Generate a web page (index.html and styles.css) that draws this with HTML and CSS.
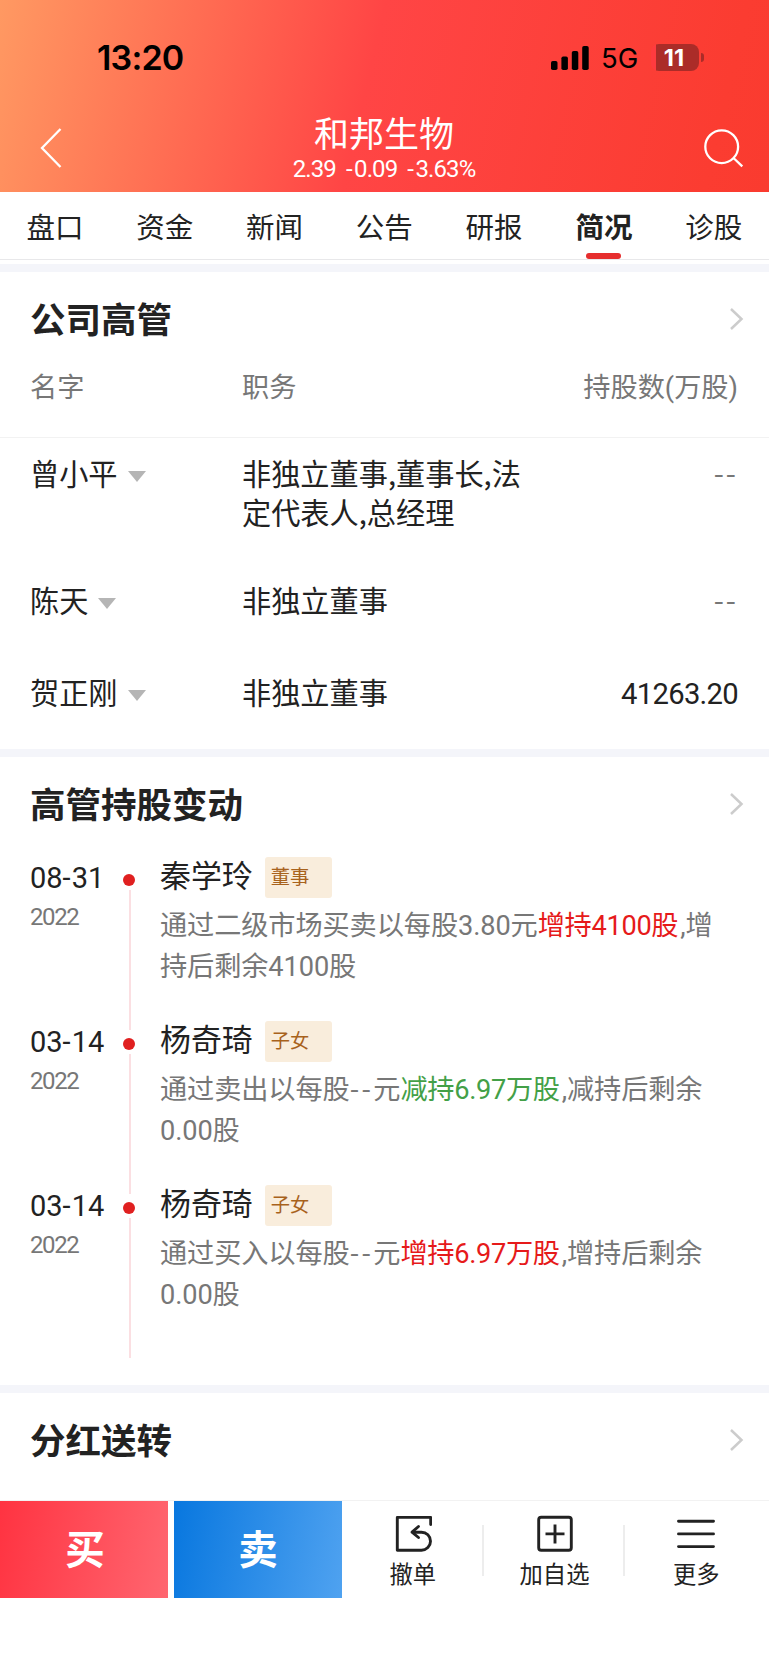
FILE: index.html
```html
<!DOCTYPE html>
<html lang="zh-CN">

<head>
    <meta charset="UTF-8">
    <meta name="viewport" content="width=device-width, initial-scale=1.0">
    <title>和邦生物</title>
    <link rel="stylesheet" href="styles.css">
</head>

<body>
    <div class="header">
        <div class="status">
            <span class="time">13:20</span>
            <svg class="signal" width="38" height="24" viewBox="0 0 38 24">
                <rect x="0" y="15" width="6.5" height="9" rx="1.8" />
                <rect x="10.4" y="10.5" width="6.5" height="13.5" rx="1.8" />
                <rect x="20.8" y="5" width="6.5" height="19" rx="1.8" />
                <rect x="31.2" y="0" width="6.5" height="24" rx="1.8" />
            </svg>
            <span class="net">5G</span>
            <div class="battery">11</div>
            <i class="battery-tip"></i>
        </div>
        <div class="nav">
            <svg class="back" width="24" height="42" viewBox="0 0 24 42">
                <path d="M21.5 2 L3 21 L21.5 40" />
            </svg>
            <div class="stock">
                <h1>和邦生物</h1>
                <p>2.39 <span>-</span>0.09 <span>-</span>3.63%</p>
            </div>
            <svg class="search" width="42" height="42" viewBox="0 0 42 42">
                <circle cx="18.7" cy="18.7" r="16.4" />
                <path d="M30.5 30 L39.3 38.4" />
            </svg>
        </div>
    </div>

    <ul class="tabs">
        <li>盘口</li>
        <li>资金</li>
        <li>新闻</li>
        <li>公告</li>
        <li>研报</li>
        <li class="active">简况</li>
        <li>诊股</li>
    </ul>

    <!-- 公司高管 -->
    <div class="section managers">
        <div class="title">
            <h2>公司高管</h2>
            <svg class="arrow" width="15" height="24" viewBox="0 0 15 24">
                <path d="M2 2 L12.5 12 L2 22" />
            </svg>
        </div>
        <div class="row thead">
            <span class="name">名字</span>
            <span class="job">职务</span>
            <span class="num">持股数(万股)</span>
        </div>
        <div class="row first">
            <span class="name">曾小平<i class="down"></i></span>
            <span class="job">非独立董事,董事长,法定代表人,总经理</span>
            <span class="num none">--</span>
        </div>
        <div class="row">
            <span class="name">陈天<i class="down"></i></span>
            <span class="job">非独立董事</span>
            <span class="num none">--</span>
        </div>
        <div class="row">
            <span class="name">贺正刚<i class="down"></i></span>
            <span class="job">非独立董事</span>
            <span class="num count">41263.20</span>
        </div>
    </div>

    <!-- 高管持股变动 -->
    <div class="section changes">
        <div class="title">
            <h2>高管持股变动</h2>
            <svg class="arrow" width="15" height="24" viewBox="0 0 15 24">
                <path d="M2 2 L12.5 12 L2 22" />
            </svg>
        </div>
        <ul class="timeline">
            <li>
                <div class="date">
                    <b>08<span>-</span>31</b>
                    <em>2022</em>
                </div>
                <div class="line"></div>
                <div class="info">
                    <div class="who">秦学玲<span class="tag">董事</span></div>
                    <p>通过二级市场买卖以每股3.80元<span class="red">增持4100股</span>,增持后剩余4100股</p>
                </div>
            </li>
            <li>
                <div class="date">
                    <b>03<span>-</span>14</b>
                    <em>2022</em>
                </div>
                <div class="line"></div>
                <div class="info">
                    <div class="who">杨奇琦<span class="tag">子女</span></div>
                    <p>通过卖出以每股<span class="dash">--</span>元<span class="green">减持6.97万股</span>,减持后剩余<br>0.00股</p>
                </div>
            </li>
            <li>
                <div class="date">
                    <b>03<span>-</span>14</b>
                    <em>2022</em>
                </div>
                <div class="line"></div>
                <div class="info">
                    <div class="who">杨奇琦<span class="tag">子女</span></div>
                    <p>通过买入以每股<span class="dash">--</span>元<span class="red">增持6.97万股</span>,增持后剩余<br>0.00股</p>
                </div>
            </li>
        </ul>
    </div>

    <!-- 分红送转 -->
    <div class="section bonus">
        <div class="title">
            <h2>分红送转</h2>
            <svg class="arrow" width="15" height="24" viewBox="0 0 15 24">
                <path d="M2 2 L12.5 12 L2 22" />
            </svg>
        </div>
    </div>

    <div class="footer">
        <div class="btn buy">买</div>
        <div class="btn sell">卖</div>
        <div class="tool">
            <svg width="38" height="38" viewBox="0 0 38 38">
                <path d="M36.7 9.5 V2.4 H3.3 V35.2 H27.5 A9 9 0 0 0 27.5 17.2 H19" />
                <path d="M24.5 11.5 L18 17.2 L24.5 22.5" />
            </svg>
            <span>撤单</span>
        </div>
        <div class="tool">
            <svg width="38" height="38" viewBox="0 0 38 38">
                <rect x="2.7" y="2.3" width="32.6" height="33" rx="2.5" />
                <path d="M9.5 18.9 H28.5 M19 9.4 V28.4" stroke-linecap="butt" />
            </svg>
            <span>加自选</span>
        </div>
        <div class="tool">
            <svg width="38" height="38" viewBox="0 0 38 38">
                <path d="M1.5 6.2 H36.5 M1.5 18.9 H36.5 M1.5 31.6 H36.5" />
            </svg>
            <span>更多</span>
        </div>
    </div>
</body>

</html>
```

FILE: styles.css
```css
* {
    margin: 0;
    padding: 0;
    list-style: none;
    box-sizing: border-box;
}

body {
    width: 769px;
    height: 1665px;
    overflow: hidden;
    background-color: #fff;
    color: #222;
    font-family: Roboto, "Noto Sans CJK SC", sans-serif;
    font-size: 29.2px;
}

svg {
    fill: none;
    flex-shrink: 0;
}

/* 头部 */
.header {
    height: 192px;
    background: linear-gradient(103deg, #ff9962 0%, #ff4545 47.5%, #fb3c31 92%, #fa3b2f 100%);
}

.status {
    display: flex;
    align-items: center;
    height: 115px;
    padding-left: 97px;
    font-family: Inter, sans-serif;
    color: #000;
}

.time {
    width: 454px;
    font-size: 34px;
    font-weight: 600;
    letter-spacing: -0.8px;
}

.signal {
    fill: #000;
}

.net {
    width: 50px;
    margin-left: 12px;
    padding-top: 1px;
    font-size: 27.5px;
}

.battery {
    width: 48px;
    height: 27px;
    padding-right: 6px;
    border-radius: 8px;
    background: linear-gradient(90deg, #ff3b3f 5px, #ab2c28 5px);
    color: #fff;
    font-size: 23.5px;
    font-weight: 700;
    line-height: 27px;
    text-align: center;
    text-indent: 4px;
}

.battery-tip {
    width: 3px;
    height: 9px;
    margin-left: 2px;
    border-radius: 0 4px 4px 0;
    background-color: #ab2c28;
}

.nav {
    display: flex;
    justify-content: space-between;
    height: 77px;
    padding: 0 24px 0 39px;
    color: #fff;
}

.nav svg {
    stroke: #fff;
    stroke-width: 2.3;
}

.back {
    margin: 12px 18px 0 0;
}

.search {
    margin-top: 13px;
}

.stock {
    margin-left: -16px;
    padding-top: 1px;
    text-align: center;
}

.stock h1 {
    font-size: 35px;
    font-weight: 400;
    line-height: 40px;
}

.stock p {
    font-size: 24px;
    letter-spacing: -0.9px;
    line-height: 26px;
    word-spacing: 5px;
}

.stock p span {
    letter-spacing: 1.5px;
}

/* 标签栏 */
.tabs {
    display: flex;
    height: 68px;
    border-bottom: 1px solid #e8e8ea;
}

.tabs li {
    display: flex;
    flex-direction: column;
    align-items: center;
    flex-shrink: 0;
    width: 109.8px;
    font-size: 28.5px;
    line-height: 61px;
    padding-top: 6px;
    height: 67px;
}

.tabs li.active {
    font-weight: 700;
}

.tabs li.active::after {
    content: "";
    width: 35px;
    height: 6px;
    margin-top: -6px;
    border-radius: 3px;
    background-color: #e62e2e;
}

/* 区块 */
.section {
    border-top: 8px solid #f4f5fa;
}

.title {
    display: flex;
    justify-content: space-between;
    align-items: center;
    height: 96px;
    padding: 1px 25px 0 30px;
}

.title h2 {
    font-size: 35.5px;
    font-weight: 700;
    line-height: 40px;
}

.arrow {
    margin-bottom: 4px;
    stroke: #ccc;
    stroke-width: 2.5;
}

/* 高管列表 */
.managers {
    height: 485px;
    margin-top: 4px;
}

.row {
    display: flex;
    height: 92px;
    padding: 0 31px 0 30px;
    line-height: 39px;
}

.thead {
    height: 70px;
    padding-top: 1px;
    border-bottom: 1px solid #f2f2f2;
    color: #777;
    font-size: 27.2px;
}

.first {
    height: 145px;
    padding-top: 18px;
}

.name {
    display: flex;
    align-items: center;
    width: 212px;
    height: 39px;
}

.down {
    margin: 1px 0 0 10px;
    border: 9px solid transparent;
    border-top: 11px solid #b5b5b5;
    border-bottom: 0;
}

.job {
    width: 290px;
    margin-top: -3px;
    font-family: "Noto Sans CJK SC", sans-serif;
}

.num {
    flex: 1;
    text-align: right;
    white-space: nowrap;
}

.count {
    letter-spacing: -0.7px;
}

.none {
    margin-top: -4px;
    color: #777;
    font-family: "Noto Sans CJK SC", sans-serif;
    letter-spacing: 2px;
}

/* 时间轴 */
.changes {
    height: 636px;
}

.timeline li {
    display: flex;
    height: 164px;
    padding-left: 30px;
}

.date {
    display: flex;
    flex-direction: column;
    width: 92px;
    padding-top: 5px;
}

.date b {
    font-size: 29px;
    font-weight: 400;
    line-height: 40px;
}

.date b span {
    letter-spacing: 1px;
}

.date em {
    color: #777;
    font-size: 24px;
    font-style: normal;
    letter-spacing: -1.4px;
    line-height: 38px;
}

.line {
    display: flex;
    flex-direction: column;
    align-items: center;
    width: 14px;
    padding-top: 21px;
}

.line::before {
    content: "";
    flex-shrink: 0;
    width: 12px;
    height: 12px;
    border-radius: 50%;
    background-color: #e02020;
}

.line::after {
    content: "";
    flex-shrink: 0;
    width: 2px;
    height: 140px;
    margin: 4px 0 0 2px;
    background-color: #fbdfe2;
}

.info {
    width: 560px;
    margin-left: 24px;
}

.who {
    display: flex;
    height: 42px;
    font-size: 30.9px;
    line-height: 48px;
}

.tag {
    width: 67px;
    height: 41px;
    margin: 4px 0 0 12px;
    padding-left: 6px;
    border-radius: 3px;
    background-color: #f9eddc;
    color: #a8621c;
    font-size: 19.3px;
    line-height: 42px;
}

.info p {
    margin-top: 11px;
    color: #777;
    font-size: 27.2px;
    letter-spacing: -0.1px;
    line-height: 41px;
}

.info .dash {
    font-family: "Noto Sans CJK SC", sans-serif;
    letter-spacing: 2.4px;
    line-height: 1;
}

.red,
.green {
    margin-right: 2px;
    letter-spacing: -0.3px;
}

.red {
    color: #e61a1a;
}

.green {
    color: #43a047;
}

.bonus {
    height: 115px;
}

/* 底部操作栏 */
.footer {
    display: flex;
    height: 98px;
    border-top: 1px solid #f2f2f2;
}

.btn {
    width: 168px;
    margin-right: 6px;
    padding-top: 1px;
    color: #fff;
    font-size: 39.5px;
    font-weight: 700;
    line-height: 97px;
    text-align: center;
}

.buy {
    padding-left: 2px;
    background: linear-gradient(100deg, #ff3341, #ff6670);
}

.sell {
    margin-right: 0;
    background: linear-gradient(100deg, #0877df, #4fa2f0);
}

.tool {
    display: flex;
    flex: 1;
    flex-direction: column;
    align-items: center;
    padding-top: 14px;
    background: linear-gradient(#ededed, #ededed) no-repeat right 24px / 2px 51px;
}

.tool:last-child {
    padding-right: 2px;
    background: none;
}

.tool svg {
    stroke: #222;
    stroke-width: 2.9;
    stroke-linecap: round;
    stroke-linejoin: round;
}

.tool span {
    margin-top: 6px;
    font-size: 23.3px;
    line-height: 32px;
}
```
